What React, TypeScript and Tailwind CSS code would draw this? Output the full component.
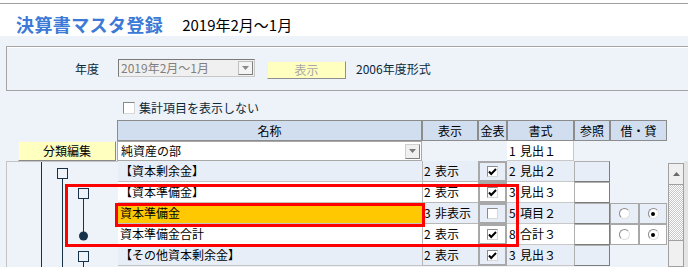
import React from 'react';

type Tone = 'light' | 'white';

const rows: {
  name: string;
  tone: Tone;
  yellow?: boolean;
  disp: [string, string];
  kin: boolean;
  fmt: [string, string];
  radio: boolean;
}[] = [
  { name: '【資本剰余金】', tone: 'light', disp: ['2', '表示'], kin: true, fmt: ['2', '見出２'], radio: false },
  { name: '【資本準備金】', tone: 'white', disp: ['2', '表示'], kin: true, fmt: ['3', '見出３'], radio: false },
  { name: '資本準備金', tone: 'light', yellow: true, disp: ['3', '非表示'], kin: false, fmt: ['5', '項目２'], radio: true },
  { name: '資本準備金合計', tone: 'white', disp: ['2', '表示'], kin: true, fmt: ['8', '合計３'], radio: true },
  { name: '【その他資本剰余金】', tone: 'light', disp: ['2', '表示'], kin: true, fmt: ['3', '見出３'], radio: false },
];

const toneBg: Record<Tone, string> = {
  light: 'bg-[#e8eef8]',
  white: 'bg-white',
};

function DownArrow({ color = '#7a7a7a' }: { color?: string }) {
  return (
    <svg width="7" height="4" viewBox="0 0 7 4">
      <path d="M0 0h7L3.5 4z" fill={color} />
    </svg>
  );
}

function Check() {
  return (
    <svg width="9" height="8" viewBox="0 0 9 8">
      <path d="M1 3.5l2.2 2.5L8 1" stroke="#000" strokeWidth="2" fill="none" />
    </svg>
  );
}

function Radio({ on }: { on: boolean }) {
  return (
    <div className="w-[11px] h-[11px] rounded-full bg-white border border-t-[#8a8a8a] border-l-[#8a8a8a] border-b-[#e0e0e0] border-r-[#e0e0e0] flex items-center justify-center">
      {on && <div className="w-[4px] h-[4px] rounded-full bg-black" />}
    </div>
  );
}

function Tree() {
  const c = '#15324a';
  return (
    <svg width="110" height="105" viewBox="0 0 110 105" className="block">
      <line x1="34.5" y1="0" x2="34.5" y2="105" stroke={c} />
      <rect x="50.5" y="6.5" width="10" height="10" fill="none" stroke={c} />
      <line x1="55.5" y1="16.5" x2="55.5" y2="105" stroke={c} />
      <rect x="71.5" y="26.5" width="10" height="10" fill="none" stroke={c} />
      <line x1="76.5" y1="36.5" x2="76.5" y2="74" stroke={c} />
      <circle cx="76.5" cy="74" r="4.5" fill={c} />
      <rect x="71.5" y="89.5" width="10" height="10" fill="none" stroke={c} />
      <line x1="76.5" y1="99.5" x2="76.5" y2="105" stroke={c} />
    </svg>
  );
}

export default function App() {
  return (
    <div className="w-[688px] h-[267px] overflow-hidden relative bg-[#eef2f9] text-[12px] text-black font-['Noto_Sans_CJK_JP',sans-serif] leading-none">
      {/* title bar */}
      <div className="h-[36px] bg-white pt-[3px]">
        <div className="h-full border-t border-[#a0a0a0] flex items-center pt-[8px] pl-[16px]">
          <h1 className="text-[18px] font-bold text-[#3b7ad6] tracking-[0.4px] leading-none">決算書マスタ登録</h1>
          <span className="ml-[19px] text-[15px] leading-none">2019年2月～1月</span>
        </div>
      </div>

      {/* filter panel */}
      <div className="mt-[10px] ml-[6px] h-[45px] border border-r-0 border-[#a4a4a4] shadow-[inset_0_1px_0_#fff] flex items-center text-[#0c2a3a]">
        <span className="ml-[68px] w-[43px]">年度</span>
        <div className="w-[137px] h-[18px] -mt-[2px] bg-[#f0f0f0] border border-[#7a7a7a] border-b-[#c8c8c8] border-r-[#c8c8c8] flex items-center pl-[2px] text-[#808080]">
          <span className="flex-1">2019年2月～1月</span>
          <div className="w-[15px] h-[14px] mr-[1px] bg-[#f4f4f4] border border-[#c0c0c0] border-b-[#808080] border-r-[#808080] flex items-center justify-center">
            <DownArrow color="#8a8a8a" />
          </div>
        </div>
        <div className="ml-[12px] w-[79px] h-[18px] mt-[2px] bg-[#ffffc0] border border-[#f0f0f0] border-b-[#909090] border-r-[#909090] flex items-center justify-center text-[#a8a8a8]">
          表示
        </div>
        <span className="ml-[10px]">2006年度形式</span>
      </div>

      {/* option checkbox */}
      <div className="h-[29px] flex items-start pt-[11px] pl-[123px] text-[#0c2a3a]">
        <div className="w-[12px] h-[12px] bg-white border border-[#8a8a8a] border-b-[#d8d8d8] border-r-[#d8d8d8]" />
        <span className="ml-[4px]">集計項目を表示しない</span>
      </div>

      {/* table header */}
      <div className="h-[21px] flex pl-[117px]">
        {[
          ['名称', 'w-[305px]'],
          ['表示', 'w-[56px]'],
          ['金表', 'w-[29px]'],
          ['書式', 'w-[67px]'],
          ['参照', 'w-[36px]'],
          ['借・貸', 'w-[57px]'],
        ].map(([t, w]) => (
          <div key={t} className={`${w} h-full bg-[#d0def0] border border-[#8c8c8c] flex items-center justify-center`}>
            {t}
          </div>
        ))}
      </div>

      {/* top-level row */}
      <div className="h-[20px] flex">
        <div className="ml-[18px] w-[98px] h-[20px] bg-[#ffffc0] border border-[#f4f4f4] border-b-[#8a8a8a] border-r-[#8a8a8a] flex items-center justify-center">
          分類編集
        </div>
        <div className="ml-[1px] w-[305px] h-[20px] bg-white border border-[#a8a8a8] flex items-center pl-[3px]">
          <span className="flex-1">純資産の部</span>
          <div className="w-[15px] h-[15px] mr-[1px] bg-[#f0f0f0] border border-[#d0d0d0] border-b-[#808080] border-r-[#808080] flex items-center justify-center">
            <DownArrow />
          </div>
        </div>
        <div className="w-[85px]" />
        <div className="w-[67px] h-[20px] bg-white border-r border-b border-[#c8c8c8] flex items-center pl-[2px]">
          <span className="w-[11px]">1</span>
          <span>見出１</span>
        </div>
      </div>

      {/* body */}
      <div className="h-[106px] flex">
        <div className="w-[118px] pl-[6px]">
          <div className="h-full border-l border-t border-[#c4c4c4]">
            <Tree />
          </div>
        </div>

        <div className="w-[549px] flex flex-col">
          {rows.map((r) => (
            <div key={r.name} className="h-[21px] flex">
              <div
                className={`w-[304px] h-full border-b border-[#c4c4c4] flex items-center pl-[2px] ${
                  r.yellow ? 'bg-[#ffc800]' : toneBg[r.tone]
                }`}
              >
                {r.name}
              </div>
              <div className={`w-[56px] h-full border-l border-b border-[#b8b8b8] flex items-center ${toneBg[r.tone]}`}>
                <span className="w-[12px] pl-[1px]">{r.disp[0]}</span>
                <span>{r.disp[1]}</span>
              </div>
              <div className={`w-[29px] h-full border-2 border-[#a8a8a8] flex items-center justify-center ${toneBg[r.tone]}`}>
                <div className="w-[11px] h-[11px] bg-white border border-[#8a8a8a] border-b-[#d8d8d8] border-r-[#d8d8d8] flex items-center justify-center">
                  {r.kin && <Check />}
                </div>
              </div>
              <div className={`w-[67px] h-full border-b border-[#c8c8c8] flex items-center pl-[2px] ${toneBg[r.tone]}`}>
                <span className="w-[11px]">{r.fmt[0]}</span>
                <span>{r.fmt[1]}</span>
              </div>
              <div className={`w-[36px] h-full border border-[#b0b0b0] border-b-[#7c7c7c] border-r-[#7c7c7c] ${toneBg[r.tone]}`} />
              {r.radio && (
                <>
                  <div className={`w-[29px] h-full border border-[#a8a8a8] flex items-center justify-center ${toneBg[r.tone]}`}>
                    <Radio on={false} />
                  </div>
                  <div className={`w-[28px] h-full border border-[#a8a8a8] flex items-center justify-center ${toneBg[r.tone]}`}>
                    <Radio on />
                  </div>
                </>
              )}
            </div>
          ))}
        </div>

        {/* scrollbar */}
        <div className="ml-[1px] mt-[2px] w-[16px] flex flex-col border border-[#a0a0a0]">
          <div className="h-[21px] bg-[#f0f0f0] border-b border-[#a0a0a0] flex items-center justify-center">
            <svg width="7" height="4" viewBox="0 0 7 4">
              <path d="M0 4h7L3.5 0z" fill="#6a6a6a" />
            </svg>
          </div>
          <div className="h-[55px] bg-[repeating-conic-gradient(#c8c8c8_0_25%,#ffffff_0_50%)] bg-[length:2px_2px]" />
          <div className="flex-1 bg-[#f0f0f0] border-t border-[#a0a0a0]" />
        </div>
        <div className="flex-1 bg-[#e4e4e4]" />
      </div>

      {/* red highlight frames */}
      <div className="absolute left-[65px] top-[184px] w-[454px] h-[63px] border-[3px] border-[#ff0000] pointer-events-none" />
      <div className="absolute left-[115px] top-[203px] w-[310px] h-[24px] border-[3px] border-[#ff0000] pointer-events-none" />
    </div>
  );
}
